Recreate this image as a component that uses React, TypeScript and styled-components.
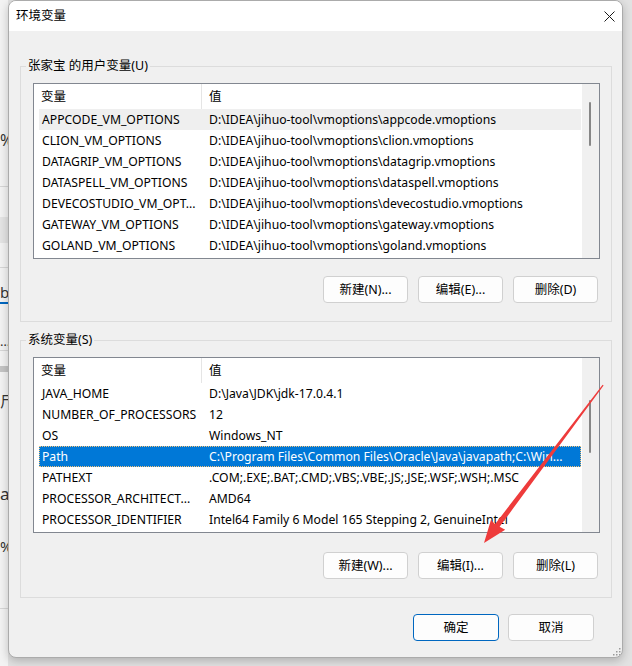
import React from 'react'
import styled, { createGlobalStyle, css } from 'styled-components'

const GlobalStyle = createGlobalStyle`
  html, body {
    margin: 0;
    padding: 0;
  }
  body {
    font-family: "Noto Sans", "Noto Sans CJK SC", sans-serif;
    font-size: 12.5px;
    color: #000;
    background: #e2e2e2;
  }
`

type RowState = 'none' | 'inactive' | 'active'

type EnvVar = { name: string; value: string; state?: RowState }

const userVars: EnvVar[] = [
  { name: 'APPCODE_VM_OPTIONS', value: 'D:\\IDEA\\jihuo-tool\\vmoptions\\appcode.vmoptions', state: 'inactive' },
  { name: 'CLION_VM_OPTIONS', value: 'D:\\IDEA\\jihuo-tool\\vmoptions\\clion.vmoptions' },
  { name: 'DATAGRIP_VM_OPTIONS', value: 'D:\\IDEA\\jihuo-tool\\vmoptions\\datagrip.vmoptions' },
  { name: 'DATASPELL_VM_OPTIONS', value: 'D:\\IDEA\\jihuo-tool\\vmoptions\\dataspell.vmoptions' },
  { name: 'DEVECOSTUDIO_VM_OPT...', value: 'D:\\IDEA\\jihuo-tool\\vmoptions\\devecostudio.vmoptions' },
  { name: 'GATEWAY_VM_OPTIONS', value: 'D:\\IDEA\\jihuo-tool\\vmoptions\\gateway.vmoptions' },
  { name: 'GOLAND_VM_OPTIONS', value: 'D:\\IDEA\\jihuo-tool\\vmoptions\\goland.vmoptions' },
]

const systemVars: EnvVar[] = [
  { name: 'JAVA_HOME', value: 'D:\\Java\\JDK\\jdk-17.0.4.1' },
  { name: 'NUMBER_OF_PROCESSORS', value: '12' },
  { name: 'OS', value: 'Windows_NT' },
  { name: 'Path', value: 'C:\\Program Files\\Common Files\\Oracle\\Java\\javapath;C:\\Win...', state: 'active' },
  { name: 'PATHEXT', value: '.COM;.EXE;.BAT;.CMD;.VBS;.VBE;.JS;.JSE;.WSF;.WSH;.MSC' },
  { name: 'PROCESSOR_ARCHITECT...', value: 'AMD64' },
  { name: 'PROCESSOR_IDENTIFIER', value: 'Intel64 Family 6 Model 165 Stepping 2, GenuineIntel' },
]

export default function App() {
  return (
    <Page>
      <GlobalStyle />
      <BackStrip aria-hidden="true">
        <Gap $h={128} />
        <BackGlyph $h={24} $size={16}>%</BackGlyph>
        <Gap $h={34} />
        <BackRule />
        <Gap $h={30} />
        <BackBlock $h={26} $color="#e4e4e4" />
        <Gap $h={24} />
        <BackRule />
        <Gap $h={14} />
        <BackGlyph $h={20} $size={15}>b</BackGlyph>
        <BackBlock $h={2} $color="#0067c0" />
        <Gap $h={28} />
        <BackGlyph $h={18} $size={13}>…</BackGlyph>
        <BackRule />
        <Gap $h={15} />
        <BackBlock $h={6} $color="#c4c4c4" />
        <Gap $h={20} />
        <BackGlyph $h={18} $size={15}>尸</BackGlyph>
        <Gap $h={73} />
        <BackGlyph $h={22} $size={17}>a</BackGlyph>
        <Gap $h={30} />
        <BackGlyph $h={22} $size={15}>%</BackGlyph>
        <Gap $h={51} />
        <BackRule />
      </BackStrip>

      <Dialog>
        <TitleBar>
          <Title>环境变量</Title>
          <CloseBox>
            <svg width="11" height="11" viewBox="0 0 11 11">
              <path d="M0.5 0.5 L10.5 10.5 M10.5 0.5 L0.5 10.5" stroke="#1a1a1a" strokeWidth="1" />
            </svg>
          </CloseBox>
        </TitleBar>

        <Body>
          <Group>
            <Legend>张家宝 的用户变量(U)</Legend>
            <VarList vars={userVars} thumbTop={18} thumbHeight={44} />
            <ButtonRow $gap={17}>
              <Btn>新建(N)...</Btn>
              <Btn>编辑(E)...</Btn>
              <Btn>删除(D)</Btn>
            </ButtonRow>
          </Group>

          <Group>
            <Legend>系统变量(S)</Legend>
            <VarList vars={systemVars} thumbTop={42} thumbHeight={53} />
            <ButtonRow $gap={19}>
              <Btn>新建(W)...</Btn>
              <Btn>编辑(I)...</Btn>
              <Btn>删除(L)</Btn>
            </ButtonRow>
          </Group>

          <Footer>
            <Btn $primary $wide>确定</Btn>
            <Btn $wide>取消</Btn>
          </Footer>

          <Grip>
            <svg width="10" height="10" viewBox="0 0 10 10">
              <rect x="8" y="2" width="1.5" height="1.5" fill="#9a9a9a" />
              <rect x="5" y="5" width="1.5" height="1.5" fill="#9a9a9a" />
              <rect x="8" y="5" width="1.5" height="1.5" fill="#9a9a9a" />
              <rect x="2" y="8" width="1.5" height="1.5" fill="#9a9a9a" />
              <rect x="5" y="8" width="1.5" height="1.5" fill="#9a9a9a" />
              <rect x="8" y="8" width="1.5" height="1.5" fill="#9a9a9a" />
            </svg>
          </Grip>
        </Body>
      </Dialog>

      <ArrowLayer width="632" height="666" viewBox="0 0 632 666">
        <polygon
          points="602.6,384.7 495.0,524.2 491.0,519.8 484,543 505.2,529.8 499.6,526.8 603.6,385.5"
          fill="#ee3b3b"
        />
      </ArrowLayer>
    </Page>
  )
}

const VarList = ({ vars, thumbTop, thumbHeight }: { vars: EnvVar[]; thumbTop: number; thumbHeight: number }) => {
  return (
    <ListBox>
      <ListContent>
        <HeaderRow>
          <HeaderCell $first>变量</HeaderCell>
          <HeaderCell>值</HeaderCell>
        </HeaderRow>
        {vars.map((v) => (
          <Row key={v.name} $state={v.state || 'none'}>
            <Cell $first>{v.name}</Cell>
            <Cell>{v.value}</Cell>
          </Row>
        ))}
      </ListContent>
      <ScrollTrack>
        <Thumb style={{ marginTop: thumbTop, height: thumbHeight }} />
      </ScrollTrack>
    </ListBox>
  )
}

const Page = styled.div`
  position: relative;
  width: 632px;
  height: 666px;
  display: flex;
  align-items: flex-start;
  overflow: hidden;
  background: #e2e2e2;
`

const BackStrip = styled.div`
  width: 8px;
  height: 666px;
  flex-shrink: 0;
  overflow: hidden;
  display: flex;
  flex-direction: column;
  background: #f3f3f3;
`

const Gap = styled.div<{ $h: number }>`
  height: ${(p) => p.$h}px;
  flex-shrink: 0;
`

const BackGlyph = styled.div<{ $h: number; $size: number }>`
  height: ${(p) => p.$h}px;
  line-height: ${(p) => p.$h}px;
  font-size: ${(p) => p.$size}px;
  white-space: nowrap;
  color: #333;
  flex-shrink: 0;
`

const BackRule = styled.div`
  height: 1px;
  background: #d6d6d6;
  flex-shrink: 0;
`

const BackBlock = styled.div<{ $h: number; $color: string }>`
  height: ${(p) => p.$h}px;
  background: ${(p) => p.$color};
  flex-shrink: 0;
`

const Dialog = styled.div`
  width: 615px;
  height: 658px;
  flex-shrink: 0;
  box-sizing: border-box;
  border: 1px solid #ababab;
  border-radius: 8px;
  background: #f0f0f0;
  display: flex;
  flex-direction: column;
  overflow: hidden;
  box-shadow: 0 3px 10px rgba(0, 0, 0, 0.22);
`

const TitleBar = styled.div`
  height: 30px;
  flex-shrink: 0;
  background: #ffffff;
  display: flex;
  align-items: center;
  justify-content: space-between;
  padding-left: 7px;
`

const Title = styled.span`
  font-size: 12.5px;
  line-height: 16px;
`

const CloseBox = styled.div`
  width: 26px;
  height: 30px;
  display: flex;
  align-items: center;
  justify-content: center;
  padding-top: 1px;
  box-sizing: border-box;
`

const Body = styled.div`
  flex: 1;
  display: flex;
  flex-direction: column;
  padding: 27px 10px 0 11px;
`

const Group = styled.fieldset`
  margin: 0;
  padding: 9px 11px 18px 12px;
  border: 1px solid #dcdcdc;
  min-width: 0;

  & + & {
    margin-top: 10px;
  }
`

const Legend = styled.legend`
  padding: 0 2px;
  margin-left: -7px;
  line-height: 16px;
  font-size: 12.5px;
`

const ListBox = styled.div`
  height: 176px;
  box-sizing: border-box;
  border: 1px solid #828790;
  background: #ffffff;
  display: flex;
`

const ListContent = styled.div`
  flex: 1;
  min-width: 0;
  display: flex;
  flex-direction: column;
`

const HeaderRow = styled.div`
  height: 25px;
  flex-shrink: 0;
  display: flex;
`

const HeaderCell = styled.div<{ $first?: boolean }>`
  box-sizing: border-box;
  padding-left: 7px;
  line-height: 25px;
  ${(p) =>
    p.$first
      ? css`
          width: 168px;
          border-right: 1px solid #e5e5e5;
        `
      : css`
          flex: 1;
        `}
`

const Row = styled.div<{ $state: RowState }>`
  height: 21px;
  margin: 0 1px 0 5px;
  display: flex;
  flex-shrink: 0;
  box-sizing: border-box;
  ${(p) =>
    p.$state === 'inactive' &&
    css`
      background: #efefef;
    `}
  ${(p) =>
    p.$state === 'active' &&
    css`
      background: #0078d7;
      color: #ffffff;
      outline: 1px dotted #f3c27a;
      outline-offset: -1px;
    `}
`

const Cell = styled.div<{ $first?: boolean }>`
  font-size: 12.2px;
  line-height: 22px;
  white-space: nowrap;
  overflow: hidden;
  text-overflow: ellipsis;
  box-sizing: border-box;
  ${(p) =>
    p.$first
      ? css`
          width: 163px;
          flex-shrink: 0;
          padding: 0 1px 0 3px;
        `
      : css`
          flex: 1;
          min-width: 0;
          padding: 0 4px 0 7px;
        `}
`

const ScrollTrack = styled.div`
  width: 17px;
  flex-shrink: 0;
  background: #f0f0f0;
  display: flex;
  flex-direction: column;
  align-items: center;
`

const Thumb = styled.div`
  width: 2px;
  margin-right: 1px;
  border-radius: 1px;
  background: #878787;
`

const ButtonRow = styled.div<{ $gap: number }>`
  display: flex;
  justify-content: flex-end;
  gap: 10px;
  margin-top: ${(p) => p.$gap}px;
  padding-right: 2px;
`

const Btn = styled.button<{ $primary?: boolean; $wide?: boolean }>`
  width: ${(p) => (p.$wide ? 86 : 85)}px;
  height: 27px;
  box-sizing: border-box;
  padding: 0;
  border: 1px solid ${(p) => (p.$primary ? '#0067c0' : '#d0d0d0')};
  border-radius: 4px;
  background: #fdfdfd;
  font-family: inherit;
  font-size: 12.5px;
  color: #000;
  line-height: 25px;
`

const Footer = styled.div`
  display: flex;
  justify-content: flex-end;
  gap: 9px;
  margin-top: 16px;
  padding-right: 18px;
`

const Grip = styled.div`
  margin-top: auto;
  margin-right: -9px;
  margin-bottom: 1px;
  align-self: flex-end;
  width: 10px;
  height: 10px;
  display: flex;
`

const ArrowLayer = styled.svg`
  position: absolute;
  top: 0;
  left: 0;
  pointer-events: none;
`
